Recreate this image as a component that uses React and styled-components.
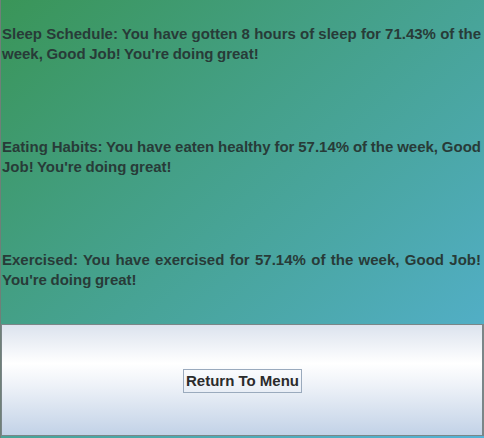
import React from 'react';
import styled, { createGlobalStyle } from 'styled-components';

const Global = createGlobalStyle`
  html, body { margin: 0; padding: 0; }
  body { font-family: "Liberation Sans", Arial, sans-serif; }
`;

const Frame = styled.div`
  width: 484px;
  height: 438px;
  box-sizing: border-box;
  border-left: 1px solid #6f7f78;
  background: linear-gradient(to bottom right, #3a9558, #55b2d6);
  display: flex;
  flex-direction: column;
  overflow: hidden;
`;

const Report = styled.div`
  height: 324px;
  box-sizing: border-box;
  padding: 24px 3px 0 1px;
  display: flex;
  flex-direction: column;
  gap: 73px;
`;

const Line = styled.p`
  margin: 0;
  font-size: 15px;
  font-weight: bold;
  line-height: 20px;
  color: #283b38;
  text-align: justify;
  text-align-last: left;
  word-spacing: -0.6px;
`;

const Footer = styled.div`
  height: 112px;
  box-sizing: border-box;
  border: 1px solid #7a8688;
  border-right-width: 2px;
  background: linear-gradient(#dce3ee 0%, #ffffff 35%, #eef2f8 55%, #c2d2e7 100%);
  display: flex;
  align-items: center;
  justify-content: center;
  padding-top: 1px;
`;

const MenuButton = styled.button`
  font-family: "Liberation Sans", Arial, sans-serif;
  font-size: 15px;
  font-weight: bold;
  color: #2b2b2b;
  background: transparent;
  border: 1px solid #9aaabd;
  padding: 2px 2px;
  line-height: 18px;
  margin-left: 1px;
`;

const stats = [
  "Sleep Schedule: You have gotten 8 hours of sleep for 71.43% of the week, Good Job! You're doing great!",
  "Eating Habits: You have eaten healthy for 57.14% of the week, Good Job! You're doing great!",
  "Exercised: You have exercised for 57.14% of the week, Good Job! You're doing great!",
];

export default function App() {
  return (
    <>
      <Global />
      <Frame>
        <Report>
          {stats.map((s) => (
            <Line key={s}>{s}</Line>
          ))}
        </Report>
        <Footer>
          <MenuButton>Return To Menu</MenuButton>
        </Footer>
      </Frame>
    </>
  );
}
